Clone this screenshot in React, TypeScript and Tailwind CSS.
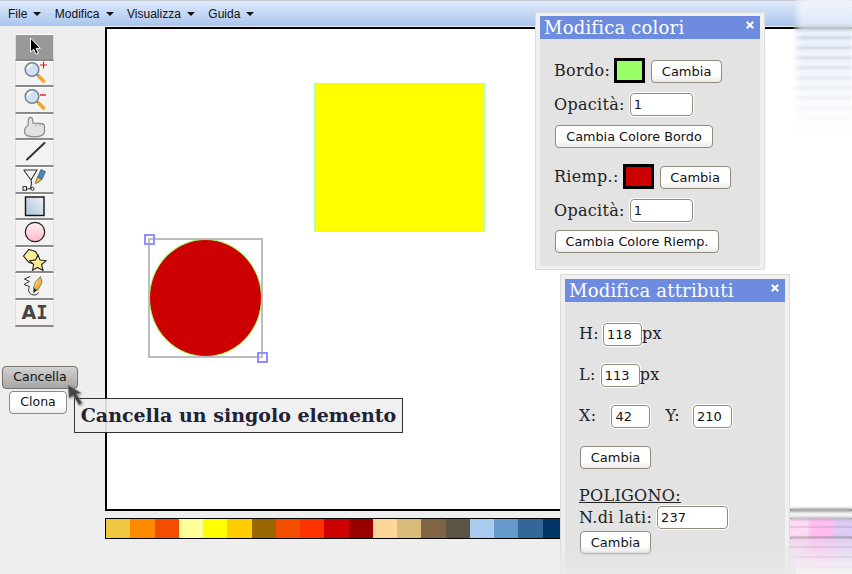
import React from 'react'

const sans = "font-['DejaVu_Sans',sans-serif]"

const menuItems = ['File', 'Modifica', 'Visualizza', 'Guida']

const swatches = [
  '#efc63f', '#ff8c00', '#f54d00', '#ffff99', '#ffff00', '#ffcc00', '#996600', '#f54d00',
  '#ff3300', '#cc0000', '#990000', '#ffd699', '#d9bb7a', '#806545', '#5c5545', '#a8ccf0',
  '#6699cc', '#336699', '#003366', '#003366', '#003366', '#003366', '#669966', '#99cc66',
  '#ffc8f2', '#ffc8f2', '#ffc8f2', '#ffc8f2', '#ffc8f2', '#ff9cea', '#c8b0f0',
]

const Magnifier = ({ sign }: { sign: 'plus' | 'minus' }) => (
  <svg width="24" height="24" viewBox="0 0 24 24">
    <circle cx="9" cy="8.500" r="6.800" fill="#cfe2f5" stroke="#74838f" strokeWidth="1.500" />
    <path d="M5 8a4.500 4.500 0 0 1 4.500-4" fill="none" stroke="#fff" strokeWidth="1.400" />
    <path d="M14 13.500l2 2" stroke="#777" strokeWidth="2.200" />
    <path d="M16 15.500l4.500 4.500" stroke="#eda52b" strokeWidth="3.600" strokeLinecap="round" />
    {sign === 'plus' ? (
      <path d="M17 4h7M20.500 .5v7" stroke="#d81e1e" strokeWidth="1.200" />
    ) : (
      <path d="M17 7h6" stroke="#d81e1e" strokeWidth="1.400" />
    )}
  </svg>
)

const tools: React.ReactNode[] = [
  <svg key="arrow" width="24" height="24" viewBox="0 0 24 24">
    <path d="M7.500 3v14l3.200-2.800 2.200 5 2.400-1-2.200-4.900h4.200z" fill="#000" stroke="#fff" strokeWidth="1" />
  </svg>,
  <Magnifier key="in" sign="plus" />,
  <Magnifier key="out" sign="minus" />,
  <svg key="hand" width="24" height="24" viewBox="0 0 24 24">
    <path
      d="M5 10.500L5.500 4c.3-2 3.700-2 4 0l.5 4.200 7.500.3c2.500 0 4 1 4 3.200v4.300c0 3.800-4 5.800-10 5.800-6 0-10-1.300-10-5.300 0-3.200 1.500-4.800 3.500-6z"
      fill="#e2e2e2"
      stroke="#8e8e8e"
      strokeWidth="1.300"
    />
    <path d="M13 8.500v3M17 8.500v3" stroke="#b0b0b0" strokeWidth="1" />
  </svg>,
  <svg key="line" width="24" height="24" viewBox="0 0 24 24">
    <path d="M4 18.500L21.500 2" stroke="#333" strokeWidth="2" strokeLinecap="round" />
  </svg>,
  <svg key="bezier" width="26" height="24" viewBox="0 0 26 24">
    <path d="M1.700 2H15L9 12c1 3 .5 6-1 8.500M1.700 2L9 12" fill="none" stroke="#333" strokeWidth="1.100" />
    <path d="M4.500 20.800h5" stroke="#333" strokeWidth="1" />
    <rect x="1" y="18.700" width="3.500" height="3.500" fill="#fff" stroke="#222" />
    <circle cx="10.500" cy="20.800" r="1.500" fill="#fff" stroke="#222" />
    <path d="M19 1.500l4.500 2.200-3.700 7.800-4.300-2.300z" fill="#4a87b5" stroke="#2f5f85" strokeWidth=".8" />
    <path d="M15.500 9.200l4.300 2.300-3.500 3-3.300.8z" fill="#f2b632" stroke="#555" strokeWidth=".7" />
  </svg>,
  <svg key="rect" width="24" height="24" viewBox="0 0 24 24">
    <defs>
      <linearGradient id="rectFill" x1="0" y1="1" x2="1" y2="0">
        <stop offset="0" stopColor="#a9c2da" />
        <stop offset="1" stopColor="#eef3f8" />
      </linearGradient>
    </defs>
    <rect x="2.500" y="3" width="18.500" height="18.500" fill="url(#rectFill)" stroke="#111" strokeWidth="1.400" />
  </svg>,
  <svg key="ellipse" width="24" height="24" viewBox="0 0 24 24">
    <defs>
      <linearGradient id="ellipseFill" x1="0" y1="0" x2="0" y2="1">
        <stop offset="0" stopColor="#fff1f3" />
        <stop offset="1" stopColor="#ffb9c6" />
      </linearGradient>
    </defs>
    <circle cx="12" cy="11" r="9.700" fill="url(#ellipseFill)" stroke="#222" strokeWidth="1.200" />
  </svg>,
  <svg key="poly" width="26" height="24" viewBox="0 0 26 24">
    <path d="M7 1.500l6.500 2 3 5-3 7.500-6.500-1.500L1.500 8z" fill="#ffef96" stroke="#222" strokeWidth="1.100" />
    <path d="M16 7l2 5 6 .8-4.500 3.700 1.500 6-5.500-3-5 2.800 1.200-5.800-4-3.700 5.800-.9z" fill="#ffef96" stroke="#222" strokeWidth="1.100" />
  </svg>,
  <svg key="pencil" width="24" height="24" viewBox="0 0 24 24">
    <path d="M7 2.500L1.500 5 6.500 7.500 1 10.500l5.500 2c-1.500 3-1 6.500 2 8 3 1 6 .5 7-2" fill="none" stroke="#333" strokeWidth="1" />
    <path d="M17.500 2.500l1.500 6-4.500 8-4-2.500 2-6z" fill="#f6b52e" stroke="#666" strokeWidth=".8" />
    <path d="M16.500 4l-3.500 5-1 4z" fill="#fff3c0" />
    <path d="M10.500 14l3.500 2-3.700 3.500z" fill="#222" />
  </svg>,
  <span key="text" className="flex items-baseline text-[19px] font-bold leading-none text-[#444]">
    <span className={sans}>A</span>
    <span className="font-['DejaVu_Sans_Mono',monospace] text-[19px]">I</span>
  </span>,
]

const Btn = ({ label, className = '' }: { label: string; className?: string }) => (
  <button
    className={`h-[23px] rounded-[4px] border border-[#928b7b] bg-[linear-gradient(#fff_65%,#ececec)] text-center leading-none tracking-normal text-[#111] ${sans} ${className}`}
  >
    {label}
  </button>
)

const Field = ({ value, className = '' }: { value: string; className?: string }) => (
  <div
    className={`flex h-[23px] items-center rounded-[4px] border border-[#928b7b] bg-white pl-[3px] text-[13px] leading-none tracking-normal text-[#111] shadow-[0_0_0_1px_#fff] ${sans} ${className}`}
  >
    {value}
  </div>
)

const Swatch = ({ color }: { color: string }) => (
  <div className="h-[25px] w-[31px] border-[3px] border-black" style={{ backgroundColor: color }} />
)

const Panel = ({ title, className, children }: { title: string; className: string; children: React.ReactNode }) => (
  <div
    className={`absolute border border-[#dcdcdc] bg-[#f0f0f0] px-[4px] font-['DejaVu_Serif',serif] text-[16px] leading-none tracking-[0.3px] text-[#222] ${className}`}
  >
    <div className="relative flex h-[23px] items-center bg-[#6d8cdf] pl-[4px] text-[18px] tracking-[0.2px] text-white">
      {title}
      <svg className="absolute right-[6px] top-[5px]" width="8" height="8" viewBox="0 0 8 8">
        <path d="M.8.800l6.400 6.400M7.200.8L.8 7.200" stroke="#fff" strokeWidth="2" />
      </svg>
    </div>
    {children}
  </div>
)

export default function App() {
  return (
    <div className="relative h-[574px] w-[852px] overflow-hidden bg-[#eeeeee]">
      {/* Menu */}
      <div className="flex h-[26px] items-center gap-[13.500px] border-t border-[#c5c9d0] bg-[linear-gradient(#dfeafb,#a9c5ee)] pl-[8px] font-['Liberation_Sans',sans-serif] text-[12px] text-[#111]">
        {menuItems.map((item) => (
          <div key={item} className="flex items-center gap-[6px]">
            {item}
            <span className="border-x-[4px] border-t-[4px] border-x-transparent border-t-[#111]" />
          </div>
        ))}
      </div>

      <div className="flex">
        {/* Tools */}
        <div className="flex w-[105px] flex-none flex-col items-start">
          <div className="ml-[15px] mt-[8px] flex w-[39px] flex-col">
            {tools.map((tool, i) => (
              <div
                key={i}
                className={`flex h-[26.600px] items-center justify-center border-x border-t border-b-2 border-x-[#dddddd] border-t-white border-b-[#8a8a8a] ${
                  i === 0 ? 'bg-[#999999]' : 'bg-[#f3f2f1]'
                }`}
              >
                {tool}
              </div>
            ))}
          </div>
          <button
            className={`ml-[2px] mt-[39px] h-[23px] w-[76px] rounded-[4px] border border-[#77736a] bg-[linear-gradient(#d2d2d2,#a6a6a6)] pt-px text-[12.500px] leading-none text-[#111] ${sans}`}
          >
            Cancella
          </button>
          <Btn label="Clona" className="ml-[9px] mt-[2px] w-[58px] pt-px text-[12.500px]" />
        </div>

        <div className="min-w-0 flex-1">
          {/* Canvas */}
          <div className="relative mr-[-4px] mt-px h-[484px] border-[2px] border-black bg-white">
            <div className="absolute left-[207px] top-[54px] h-[149px] w-[171px] border border-[#aaffaa] bg-[#ffff00]" />
            <div className="absolute left-[42px] top-[210px] h-[118px] w-[113px] rounded-[50%] border border-[#99ff66] bg-[#cc0000]" />
            <div className="absolute left-[41px] top-[209px] h-[120px] w-[115px] border-2 border-[#bdbdbd]" />
            <div className="absolute left-[37px] top-[205px] h-[11px] w-[11px] border-2 border-[#8f8fff]" />
            <div className="absolute left-[150px] top-[323px] h-[11px] w-[11px] border-2 border-[#8f8fff]" />
          </div>
          {/* Palette */}
          <div className="mt-[7px] flex h-[21px] border-y border-l border-black">
            {swatches.map((color, i) => (
              <div key={i} className="w-[24.250px] flex-none" style={{ backgroundColor: color }} />
            ))}
          </div>
        </div>
      </div>

      {/* Fading right edge, top */}
      <div className="absolute right-0 top-0 h-[140px] w-[60px] bg-[linear-gradient(rgba(255,255,255,0.55),rgba(255,255,255,0.6)_18%,rgba(255,255,255,0.85)_100%)] backdrop-blur-[2px] [mask-image:linear-gradient(90deg,transparent,#000_10px)]">
        <div className="mt-[27px] h-[105px] bg-[repeating-linear-gradient(rgba(95,110,140,0.5)_0_1px,rgba(150,165,195,0.4)_1px_2px,rgba(210,226,247,0.5)_3px_9px,rgba(150,165,195,0.3)_10px)] blur-[1px] [mask-image:linear-gradient(#000,transparent)]" />
      </div>
      {/* Fading right edge, bottom */}
      <div className="absolute bottom-0 right-0 h-[68px] w-[62px] bg-white/35 backdrop-blur-[1.500px]">
        <div className="mt-[33px] h-[35px] bg-[linear-gradient(90deg,#f0dcef,#f6c4f0_45%,#dfd0f2)] [mask-image:linear-gradient(#000,transparent)]" />
        <div className="absolute inset-x-0 top-[12px] h-[56px] bg-[repeating-linear-gradient(transparent_0_8px,rgba(90,80,100,0.3)_9px,transparent_10px)] blur-[0.5px] [mask-image:linear-gradient(#000_40%,transparent)]" />
      </div>

      {/* Colour panel */}
      <Panel title="Modifica colori" className="left-[535px] top-[12px] h-[258px] w-[230px] pt-[3px]">
        <div className="flex h-[227px] flex-col items-start bg-[#e3e3e3] pl-[14px] pt-[19px]">
          <div className="flex items-center">
            <span className="mr-[4px]">Bordo:</span>
            <Swatch color="#99ff66" />
            <Btn label="Cambia" className="ml-[6px] w-[71px] self-end text-[13px]" />
          </div>
          <div className="mt-[10px] flex items-center">
            <span className="mr-[5px]">Opacità:</span>
            <Field value="1" className="w-[63px]" />
          </div>
          <Btn label="Cambia Colore Bordo" className="ml-px mt-[9px] w-[158px] pt-px text-[12.800px]" />
          <div className="mt-[16px] flex items-center">
            <span className="mr-[4px]">Riemp.:</span>
            <Swatch color="#cc0000" />
            <Btn label="Cambia" className="ml-[6px] w-[71px] self-end text-[13px]" />
          </div>
          <div className="mt-[10px] flex items-center">
            <span className="mr-[5px]">Opacità:</span>
            <Field value="1" className="w-[63px]" />
          </div>
          <Btn label="Cambia Colore Riemp." className="ml-px mt-[8px] w-[164px] pt-px text-[12.800px]" />
        </div>
      </Panel>

      {/* Attributes panel */}
      <Panel title="Modifica attributi" className="left-[560px] top-[274px] h-[310px] w-[230px] pt-[4px]">
        <div className="flex h-[290px] flex-col items-start bg-[#e3e3e3] pl-[14px] pt-[21px]">
          <div className="flex items-center">
            <span className="mb-[2px] mr-[4px]">H:</span>
            <Field value="118" className="w-[39px]" />
            <span className="mb-[2px]">px</span>
          </div>
          <div className="mt-[18px] flex items-center">
            <span className="mb-[2px] mr-[5px]">L:</span>
            <Field value="113" className="w-[39px]" />
            <span className="mb-[2px]">px</span>
          </div>
          <div className="mt-[18px] flex items-center">
            <span className="mb-[2px] mr-[15px]">X:</span>
            <Field value="42" className="w-[39px]" />
            <span className="mb-[2px] ml-[15px] mr-[13px]">Y:</span>
            <Field value="210" className="w-[39px]" />
          </div>
          <Btn label="Cambia" className="ml-px mt-[18px] w-[71px] text-[13px]" />
          <div className="mt-[19px] underline">POLIGONO:</div>
          <div className="mt-[2px] flex items-center">
            <span className="mr-[5px]">N.di lati:</span>
            <Field value="237" className="w-[71px]" />
          </div>
          <Btn label="Cambia" className="ml-px mt-[2px] w-[71px] text-[13px]" />
        </div>
      </Panel>
      <div className="absolute bottom-0 left-[560px] h-[30px] w-[236px] bg-[linear-gradient(rgba(238,238,238,0),rgba(232,232,232,0.85))] backdrop-blur-[1px] [mask-image:linear-gradient(transparent,#000_50%)]" />

      {/* Tooltip */}
      <div className="absolute left-[74px] top-[398px] flex h-[35px] w-[329px] items-center justify-center border border-[#333333] bg-[#eeeeee]/90 font-['DejaVu_Serif',serif] text-[19px] font-bold leading-none text-[#222233]">
        Cancella un singolo elemento
      </div>

      {/* Pointer */}
      <svg className="absolute left-[65px] top-[384px] drop-shadow-[1px_1px_1px_rgba(0,0,0,0.4)]" width="20" height="24" viewBox="0 0 20 24">
        <path d="M3 1l1 13 4-2.500L14 21l3-2-5.500-9 4.500-1z" fill="#3c3c3c" fillOpacity="0.9" stroke="#999999" strokeOpacity="0.6" />
      </svg>
    </div>
  )
}
